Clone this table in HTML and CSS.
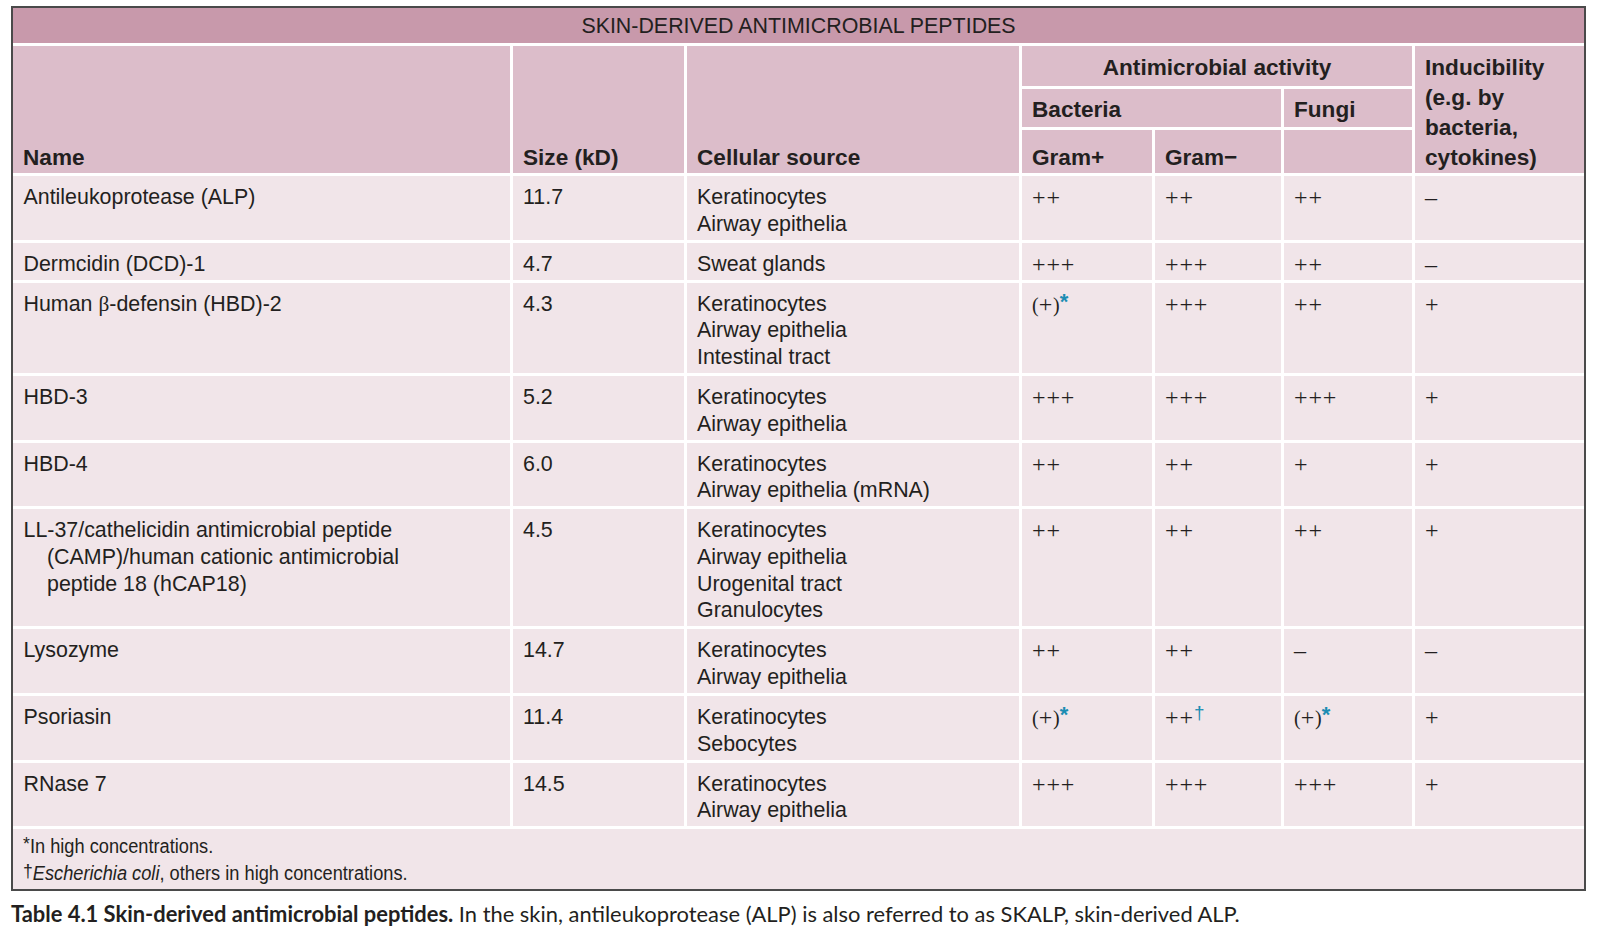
FILE: index.html
```html
<!DOCTYPE html>
<html lang="en">
<head>
<meta charset="utf-8">
<title>Skin-derived antimicrobial peptides</title>
<link rel="stylesheet" href="styles.css">
</head>
<body>
<div class="frame">
  <div class="tbl">
    <div class="title">SKIN-DERIVED ANTIMICROBIAL PEPTIDES</div>

    <div class="h h-bottom rows3">Name</div>
    <div class="h h-bottom rows3">Size (kD)</div>
    <div class="h h-bottom rows3">Cellular source</div>
    <div class="h h-a cols3 center">Antimicrobial activity</div>
    <div class="h h-top rows3">Inducibility<br>(e.g. by<br>bacteria,<br>cytokines)</div>
    <div class="h h-b cols2">Bacteria</div>
    <div class="h h-b">Fungi</div>
    <div class="h h-c">Gram+</div>
    <div class="h h-c">Gram&minus;</div>
    <div class="h h-c"></div>

    <div class="c name">Antileukoprotease (ALP)</div>
    <div class="c">11.7</div>
    <div class="c">Keratinocytes<br>Airway epithelia</div>
    <div class="c mk">++</div>
    <div class="c mk">++</div>
    <div class="c mk">++</div>
    <div class="c mk">&ndash;</div>

    <div class="c name">Dermcidin (DCD)-1</div>
    <div class="c">4.7</div>
    <div class="c">Sweat glands</div>
    <div class="c mk">+++</div>
    <div class="c mk">+++</div>
    <div class="c mk">++</div>
    <div class="c mk">&ndash;</div>

    <div class="c name">Human <span class="beta">&beta;</span>-defensin (HBD)-2</div>
    <div class="c">4.3</div>
    <div class="c">Keratinocytes<br>Airway epithelia<br>Intestinal tract</div>
    <div class="c mk"><span class="par">(</span>+<span class="par">)</span><span class="ast">*</span></div>
    <div class="c mk">+++</div>
    <div class="c mk">++</div>
    <div class="c mk">+</div>

    <div class="c name">HBD-3</div>
    <div class="c">5.2</div>
    <div class="c">Keratinocytes<br>Airway epithelia</div>
    <div class="c mk">+++</div>
    <div class="c mk">+++</div>
    <div class="c mk">+++</div>
    <div class="c mk">+</div>

    <div class="c name">HBD-4</div>
    <div class="c">6.0</div>
    <div class="c">Keratinocytes<br>Airway epithelia (mRNA)</div>
    <div class="c mk">++</div>
    <div class="c mk">++</div>
    <div class="c mk">+</div>
    <div class="c mk">+</div>

    <div class="c name">LL-37/cathelicidin antimicrobial peptide<br>(CAMP)/human cationic antimicrobial<br>peptide 18 (hCAP18)</div>
    <div class="c">4.5</div>
    <div class="c">Keratinocytes<br>Airway epithelia<br>Urogenital tract<br>Granulocytes</div>
    <div class="c mk">++</div>
    <div class="c mk">++</div>
    <div class="c mk">++</div>
    <div class="c mk">+</div>

    <div class="c name">Lysozyme</div>
    <div class="c">14.7</div>
    <div class="c">Keratinocytes<br>Airway epithelia</div>
    <div class="c mk">++</div>
    <div class="c mk">++</div>
    <div class="c mk">&ndash;</div>
    <div class="c mk">&ndash;</div>

    <div class="c name">Psoriasin</div>
    <div class="c">11.4</div>
    <div class="c">Keratinocytes<br>Sebocytes</div>
    <div class="c mk"><span class="par">(</span>+<span class="par">)</span><span class="ast">*</span></div>
    <div class="c mk">++<span class="dag">&dagger;</span></div>
    <div class="c mk"><span class="par">(</span>+<span class="par">)</span><span class="ast">*</span></div>
    <div class="c mk">+</div>

    <div class="c name">RNase 7</div>
    <div class="c">14.5</div>
    <div class="c">Keratinocytes<br>Airway epithelia</div>
    <div class="c mk">+++</div>
    <div class="c mk">+++</div>
    <div class="c mk">+++</div>
    <div class="c mk">+</div>

    <div class="foot">
      <div class="fn"><span class="fsup">*</span>In high concentrations.</div>
      <div class="fn"><span class="fsup">&dagger;</span><i>Escherichia coli</i>, others in high concentrations.</div>
    </div>
  </div>
</div>
<p class="caption"><b>Table 4.1 Skin-derived antimicrobial peptides.</b> In the skin, antileukoprotease (ALP) is also referred to as SKALP, skin-derived ALP.</p>
</body>
</html>
```

FILE: styles.css
```css
html, body {
  margin: 0;
  padding: 0;
  background: #ffffff;
}

body {
  font-family: "Liberation Sans", Arial, sans-serif;
  color: #231f20;
}

.frame {
  margin: 6px 0 0 11px;
  width: 1571px;
  border: 2px solid #4a4a4a;
  background: #ffffff;
}

.tbl {
  display: grid;
  grid-template-columns: 497px 171px 332px 130px 126px 128px 169px;
  grid-template-rows: 35px 40px 38px 43px;
  grid-auto-rows: auto;
  gap: 3px;
  background: #ffffff;
}

.title {
  grid-column: 1 / -1;
  background: #c899ab;
  text-align: center;
  font-size: 21.4px;
  line-height: 35px;
  padding-top: 1px;
  box-sizing: border-box;
}

.h {
  background: #dcbdca;
  font-weight: bold;
  font-size: 22.6px;
  line-height: 30px;
  padding: 0 10px;
  box-sizing: border-box;
}

.rows3 { grid-row: span 3; }
.cols3 { grid-column: span 3; }
.cols2 { grid-column: span 2; }
.center { text-align: center; }

.h-bottom {
  display: flex;
  align-items: flex-end;
  padding-bottom: 0;
}

.h-top { padding-top: 7px; }
.h-a { padding-top: 7px; }
.h-b { padding-top: 6px; }
.h-c { padding-top: 13px; }

.c {
  background: #f1e5e9;
  font-size: 21.4px;
  line-height: 26.6px;
  padding: 8px 10px 2.5px 10px;
  white-space: nowrap;
}

.name {
  padding-left: 34px;
  text-indent: -23.5px;
}

.beta {
  font-family: "Liberation Serif", "Times New Roman", serif;
}

.mk {
  font-family: "Liberation Serif", "Times New Roman", serif;
  font-size: 24px;
  letter-spacing: 0.9px;
}

.par {
  font-size: 20px;
  letter-spacing: 0;
}

.ast {
  font-family: "Liberation Sans", Arial, sans-serif;
  font-weight: bold;
  font-size: 22px;
  color: #1b8db3;
  vertical-align: 0.12em;
  line-height: 0;
}

.dag {
  font-family: "Liberation Sans", Arial, sans-serif;
  font-size: 19px;
  color: #1b8db3;
  vertical-align: 0.3em;
  line-height: 0;
}

.foot {
  grid-column: 1 / -1;
  background: #f1e5e9;
  padding: 4px 10px 2px 10px;
}

.fn {
  font-size: 19.6px;
  line-height: 26.6px;
  transform: scaleX(0.93);
  transform-origin: left center;
  white-space: nowrap;
}

.fsup {
  font-size: 19px;
  vertical-align: 0.15em;
  line-height: 0;
}

.caption {
  margin: 10px 0 0 11px;
  font-family: Lato, "Open Sans", sans-serif;
  font-size: 21.9px;
  line-height: 26px;
  color: #231f20;
}

.caption b {
  font-weight: 700;
}
```
